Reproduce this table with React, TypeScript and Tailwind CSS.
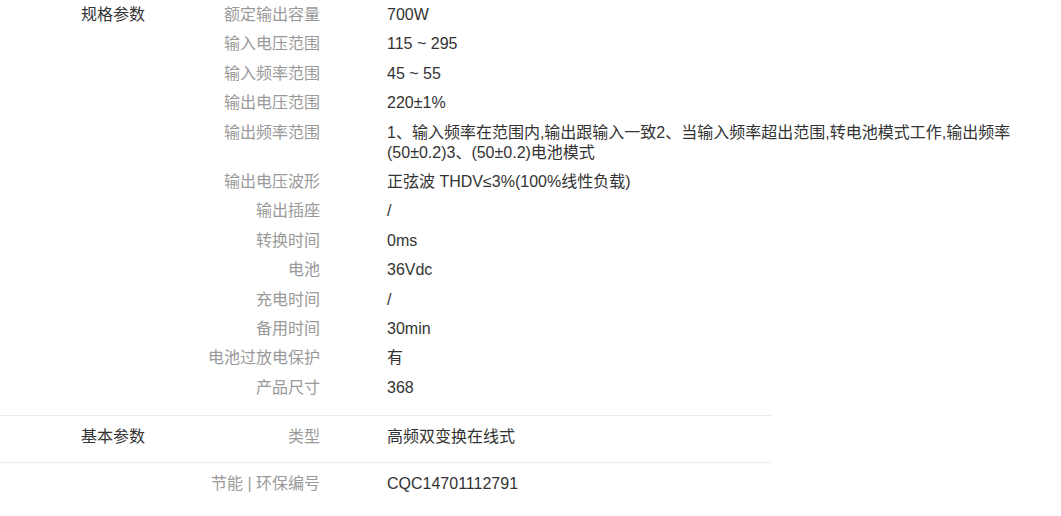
import React from 'react';

type Row = { key: string; value: string };

const specs: Row[] = [
  { key: '额定输出容量', value: '700W' },
  { key: '输入电压范围', value: '115 ~ 295' },
  { key: '输入频率范围', value: '45 ~ 55' },
  { key: '输出电压范围', value: '220±1%' },
  {
    key: '输出频率范围',
    value: '1、输入频率在范围内,输出跟输入一致2、当输入频率超出范围,转电池模式工作,输出频率(50±0.2)3、(50±0.2)电池模式',
  },
  { key: '输出电压波形', value: '正弦波 THDV≤3%(100%线性负载)' },
  { key: '输出插座', value: '/' },
  { key: '转换时间', value: '0ms' },
  { key: '电池', value: '36Vdc' },
  { key: '充电时间', value: '/' },
  { key: '备用时间', value: '30min' },
  { key: '电池过放电保护', value: '有' },
  { key: '产品尺寸', value: '368' },
];

const SpecRow: React.FC<{ row: Row }> = ({ row }) => (
  <div className="flex">
    <div className="w-[120px] shrink-0 text-right text-[#999]">{row.key}</div>
    <div className="ml-[67px] w-[650px] text-[#333]">{row.value}</div>
  </div>
);

const Section: React.FC<{ title?: string; rows: Row[]; className?: string }> = ({ title, rows, className }) => (
  <div className={`flex ${className ?? ''}`}>
    <div className="w-[200px] shrink-0 pl-[81px] text-[#333]">{title}</div>
    <div className="flex flex-col gap-[9.4px]">
      {rows.map((r) => (
        <SpecRow key={r.key} row={r} />
      ))}
    </div>
  </div>
);

const App: React.FC = () => {
  return (
    <div
      className="min-h-[516px] w-[1061px] bg-white text-[16px] leading-5"
      style={{ fontFamily: '"Liberation Sans", Arial, "Noto Sans CJK SC", sans-serif' }}
    >
      <Section title="规格参数" rows={specs} className="pt-[5px] pb-[17px]" />
      <div className="h-px w-[771px] bg-[#ebebeb]" />
      <Section title="基本参数" rows={[{ key: '类型', value: '高频双变换在线式' }]} className="pt-[11px] pb-[15px]" />
      <div className="h-px w-[771px] bg-[#ebebeb]" />
      <Section rows={[{ key: '节能 | 环保编号', value: 'CQC14701112791' }]} className="pt-[11px]" />
    </div>
  );
};

export default App;
